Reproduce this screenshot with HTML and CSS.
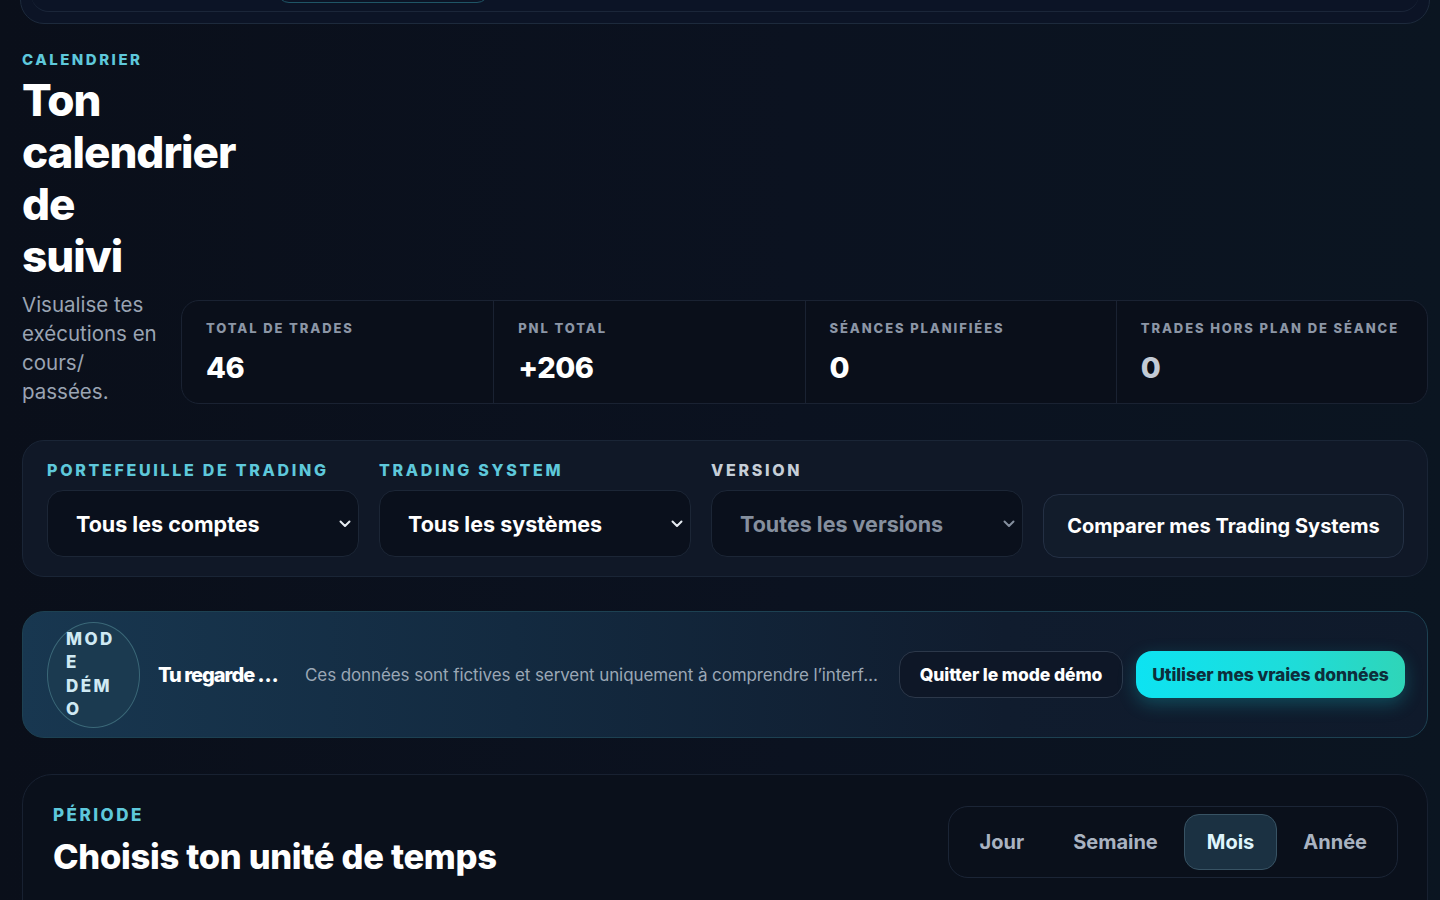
FILE: index.html
```html
<!DOCTYPE html>
<html lang="fr">
<head>
    <meta charset="UTF-8">
    <meta name="viewport" content="width=device-width, initial-scale=1.0">
    <title>Calendrier</title>
    <link rel="stylesheet" href="styles.css">
</head>
<body>

<div class="page">

    <!-- barre du haut (défilée hors de l'écran) -->
    <div class="topbar">
        <div class="topbar-inner">
            <span class="topbar-tab"></span>
        </div>
    </div>

    <section class="calendar-head">
        <div class="head-text">
            <div class="eyebrow">Calendrier</div>
            <h1>Ton calendrier de suivi</h1>
            <p>Visualise tes exécutions en cours/ passées.</p>
        </div>
        <div class="stats">
            <div class="stat">
                <div class="stat-label">Total de trades</div>
                <div class="stat-value">46</div>
            </div>
            <div class="stat">
                <div class="stat-label">PnL total</div>
                <div class="stat-value">+206</div>
            </div>
            <div class="stat">
                <div class="stat-label">Séances planifiées</div>
                <div class="stat-value">0</div>
            </div>
            <div class="stat">
                <div class="stat-label">Trades hors plan de séance</div>
                <div class="stat-value muted">0</div>
            </div>
        </div>
    </section>

    <section class="filters">
        <div class="field">
            <label class="field-label">Portefeuille de trading</label>
            <div class="select">
                <span>Tous les comptes</span>
                <svg width="12" height="8" viewBox="0 0 12 8"><path d="M1.5 1.5 6 6l4.5-4.5" fill="none" stroke="currentColor" stroke-width="2" stroke-linecap="round" stroke-linejoin="round"/></svg>
            </div>
        </div>
        <div class="field">
            <label class="field-label">Trading system</label>
            <div class="select">
                <span>Tous les systèmes</span>
                <svg width="12" height="8" viewBox="0 0 12 8"><path d="M1.5 1.5 6 6l4.5-4.5" fill="none" stroke="currentColor" stroke-width="2" stroke-linecap="round" stroke-linejoin="round"/></svg>
            </div>
        </div>
        <div class="field">
            <label class="field-label grey">Version</label>
            <div class="select disabled">
                <span>Toutes les versions</span>
                <svg width="12" height="8" viewBox="0 0 12 8"><path d="M1.5 1.5 6 6l4.5-4.5" fill="none" stroke="currentColor" stroke-width="2" stroke-linecap="round" stroke-linejoin="round"/></svg>
            </div>
        </div>
        <button class="compare-btn">Comparer mes Trading Systems</button>
    </section>

    <section class="demo-banner">
        <div class="demo-badge"><span>Mode démo</span></div>
        <strong class="demo-title">Tu regarde les données de démonstration</strong>
        <span class="demo-text">Ces données sont fictives et servent uniquement à comprendre l’interface et ses fonctionnalités.</span>
        <button class="btn-ghost">Quitter le mode démo</button>
        <button class="btn-primary">Utiliser mes vraies données</button>
    </section>

    <section class="period">
        <div>
            <div class="eyebrow">Période</div>
            <h2>Choisis ton unité de temps</h2>
        </div>
        <div class="segmented">
            <button>Jour</button>
            <button>Semaine</button>
            <button class="active">Mois</button>
            <button>Année</button>
        </div>
    </section>

</div>

</body>
</html>
```

FILE: styles.css
```css
body {
    margin: 0;
    padding: 0;
    background: linear-gradient(90deg, #0a0f1a 0%, #0b1220 55%, #0b1521 100%);
    color: #fff;
    font-family: Inter, "Noto Sans", sans-serif;
    min-height: 900px;
    overflow: hidden;
}
.page {
    padding: 0 12px 0 22px;
}

/* barre du haut */
.topbar {
    margin: -60px -2px 0 -2px;
    height: 84px;
    box-sizing: border-box;
    border: 1px solid #1d2a3c;
    border-radius: 24px;
    padding: 0 10px;
    background: #0c1426;
}
.topbar-inner {
    height: 70px;
    border-bottom: 1px solid #1b2639;
    border-radius: 0 0 18px 18px;
    position: relative;
}
.topbar-tab {
    position: absolute;
    left: 246px;
    bottom: 8px;
    width: 210px;
    height: 40px;
    border: 1px solid #1f5566;
    border-radius: 12px;
}

/* en-tête calendrier */
.calendar-head {
    display: flex;
    align-items: flex-end;
    gap: 23px;
    margin-top: 27px;
}
.head-text {
    width: 136px;
    flex-shrink: 0;
}
.eyebrow {
    color: #5ec8db;
    font-size: 15px;
    font-weight: 800;
    letter-spacing: 2.5px;
    text-transform: uppercase;
    line-height: 18px;
}
h1 {
    margin: 5px 0 0 0;
    font-size: 44px;
    line-height: 52px;
    font-weight: 800;
    letter-spacing: -1px;
    width: 120px;
}
.head-text p {
    margin: 8px 0 0 0;
    color: #9aa4b3;
    font-size: 20.5px;
    line-height: 29px;
    width: 150px;
}
.stats {
    flex: 1;
    display: grid;
    grid-template-columns: repeat(4, 1fr);
    height: 104px;
    box-sizing: border-box;
    border: 1px solid #1a2232;
    border-radius: 18px;
    background: #0a0f1a;
    margin-bottom: 2px;
}
.stat {
    padding: 19px 24px;
    border-left: 1px solid #1a2232;
}
.stat:first-child {
    border-left: none;
}
.stat-label {
    color: #8c96a6;
    font-size: 13px;
    font-weight: 800;
    letter-spacing: 1.9px;
    text-transform: uppercase;
    white-space: nowrap;
}
.stat-value {
    margin-top: 14px;
    font-size: 29px;
    font-weight: 800;
    letter-spacing: -0.5px;
}
.stat-value.muted {
    color: #c3cbd6;
}

/* filtres */
.filters {
    margin-top: 34px;
    display: grid;
    grid-template-columns: 312px 312px 312px 1fr;
    column-gap: 20px;
    align-items: end;
    padding: 19px 23px 19px 24px;
    background: #101827;
    border: 1px solid #1a2536;
    border-radius: 22px;
}
.field-label {
    display: block;
    color: #5ec8db;
    font-size: 16px;
    font-weight: 800;
    letter-spacing: 2.7px;
    text-transform: uppercase;
    line-height: 20px;
    margin-bottom: 10px;
}
.field-label.grey {
    color: #c6ced8;
}
.select {
    height: 67px;
    box-sizing: border-box;
    display: flex;
    align-items: center;
    justify-content: space-between;
    padding: 0 7px 0 28px;
    background: #0a101c;
    border: 1px solid #1c2636;
    border-radius: 16px;
    font-size: 21.5px;
    font-weight: 700;
    color: #fff;
}
.select svg {
    color: #e6ebf1;
}
.select.disabled {
    color: #858f9e;
}
.select.disabled svg {
    color: #858f9e;
}
.compare-btn {
    height: 64px;
    margin-bottom: -1px;
    background: #121c2b;
    border: 1px solid #243044;
    border-radius: 16px;
    color: #fff;
    font-family: inherit;
    font-size: 20px;
    font-weight: 700;
    cursor: pointer;
}

/* bandeau mode démo */
.demo-banner {
    margin-top: 34px;
    display: flex;
    align-items: center;
    height: 127px;
    box-sizing: border-box;
    padding: 0 22px 0 24px;
    border: 1px solid #1d4152;
    border-radius: 22px;
    background: linear-gradient(90deg, #183750 0%, #132a40 35%, #101c2e 70%, #0f1a2b 100%);
}
.demo-badge {
    width: 93px;
    height: 106px;
    box-sizing: border-box;
    flex-shrink: 0;
    padding: 5px 12px 5px 18px;
    display: flex;
    align-items: center;
    border: 1px solid #3b6878;
    border-radius: 50%;
    background: #1b3a50;
    color: #cfe9f3;
    font-size: 17px;
    font-weight: 800;
    letter-spacing: 2.4px;
    line-height: 23.5px;
    text-transform: uppercase;
}
.demo-badge span {
    width: 60px;
    overflow-wrap: anywhere;
}
.demo-title {
    margin-left: 18px;
    font-size: 20px;
    font-weight: 800;
    letter-spacing: -1px;
    white-space: nowrap;
    overflow: hidden;
    text-overflow: ellipsis;
    width: 122px;
    flex-shrink: 0;
}
.demo-text {
    margin-left: 25px;
    flex: 1;
    min-width: 0;
    color: #9ba7b5;
    font-size: 17px;
    letter-spacing: -0.1px;
    white-space: nowrap;
    overflow: hidden;
    text-overflow: ellipsis;
}
.btn-ghost, .btn-primary {
    height: 47px;
    border-radius: 16px;
    font-family: inherit;
    font-size: 17.5px;
    font-weight: 800;
    letter-spacing: -0.1px;
    cursor: pointer;
    flex-shrink: 0;
}
.btn-ghost {
    margin-left: 16px;
    width: 224px;
    background: #0e1727;
    border: 1px solid #2c384a;
    color: #fff;
}
.btn-primary {
    margin-left: 13px;
    width: 269px;
    border: none;
    background: linear-gradient(90deg, #0de3f2 0%, #1fdcd8 60%, #2fd5b8 100%);
    color: #0d2e3b;
    box-shadow: 0 6px 18px rgba(20, 220, 230, 0.25);
}

/* sélection de la période */
.period {
    margin-top: 36px;
    height: 160px;
    display: flex;
    justify-content: space-between;
    align-items: flex-start;
    padding: 30px 29px 0 30px;
    border: 1px solid #182131;
    border-radius: 30px;
    background: #0a101b;
}
.period .eyebrow {
    font-size: 17px;
    line-height: 20px;
}
h2 {
    margin: 11px 0 0 0;
    font-size: 34.5px;
    line-height: 42px;
    font-weight: 800;
    letter-spacing: -0.3px;
}
.segmented {
    margin-top: 1px;
    display: flex;
    align-items: center;
    gap: 3px;
    padding: 7px 7px 7px 8px;
    border: 1px solid #1b2536;
    border-radius: 20px;
}
.segmented button {
    height: 56px;
    padding: 0 22px;
    background: none;
    border: 1px solid transparent;
    border-radius: 15px;
    color: #a9b3c1;
    font-family: inherit;
    font-size: 20px;
    font-weight: 700;
    cursor: pointer;
}
.segmented button.active {
    background: #1b3142;
    border-color: #385364;
    color: #dff5fc;
}
```
